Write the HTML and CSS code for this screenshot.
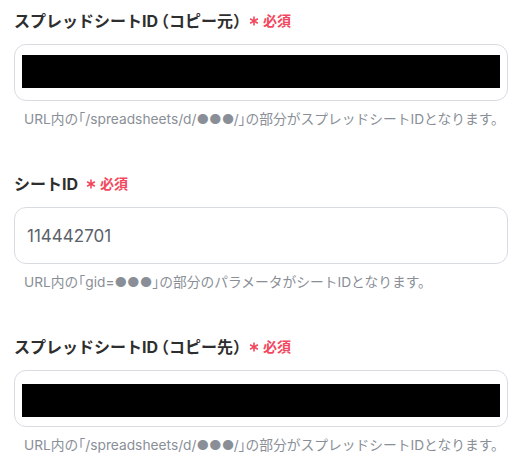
FILE: index.html
```html
<!DOCTYPE html>
<html lang="ja">
<head>
    <meta charset="UTF-8">
    <meta name="viewport" content="width=device-width, initial-scale=1.0">
    <title>スプレッドシート設定</title>
    <link rel="stylesheet" href="styles.css">
</head>
<body>

<div class="form-container">
    <div class="field">
        <label class="field-label">スプレッドシートID<span class="half paren-open">（</span>コピー元<span class="half">）</span><span class="required"><svg class="required-mark" viewBox="0 0 10 10"><path d="M5 0.5V9.5M1.1 2.75L8.9 7.25M1.1 7.25L8.9 2.75"/></svg>必須</span></label>
        <div class="field-box">
            <div class="redacted"></div>
        </div>
        <p class="field-help">URL内の<span class="half">「</span>/spreadsheets/d/●●●/<span class="half">」</span>の部分がスプレッドシートIDとなります。</p>
    </div>

    <div class="field">
        <label class="field-label">シートID<span class="required"><svg class="required-mark" viewBox="0 0 10 10"><path d="M5 0.5V9.5M1.1 2.75L8.9 7.25M1.1 7.25L8.9 2.75"/></svg>必須</span></label>
        <div class="field-box field-box-text">114442701</div>
        <p class="field-help">URL内の<span class="half">「</span>gid=●●●<span class="half">」</span>の部分のパラメータがシートIDとなります。</p>
    </div>

    <div class="field">
        <label class="field-label">スプレッドシートID<span class="half paren-open">（</span>コピー先<span class="half">）</span><span class="required"><svg class="required-mark" viewBox="0 0 10 10"><path d="M5 0.5V9.5M1.1 2.75L8.9 7.25M1.1 7.25L8.9 2.75"/></svg>必須</span></label>
        <div class="field-box field-box-low">
            <div class="redacted"></div>
        </div>
        <p class="field-help">URL内の<span class="half">「</span>/spreadsheets/d/●●●/<span class="half">」</span>の部分がスプレッドシートIDとなります。</p>
    </div>
</div>

</body>
</html>
```

FILE: styles.css
```css
body {
    font-family: 'Inter', 'Noto Sans CJK JP', sans-serif;
    margin: 0;
    padding: 0;
    background-color: #fff;
    color: #2b2b2b;
}

.form-container {
    width: 494px;
    padding: 8px 0 0 14px;
}

.field {
    margin-bottom: 42px;
}

.field:last-child {
    margin-bottom: 0;
}

.half {
    font-feature-settings: "halt";
}

.paren-open {
    margin-left: 3px;
}

.field-label {
    display: flex;
    align-items: center;
    height: 24px;
    font-size: 16px;
    font-weight: bold;
    color: #2e2e2e;
}

.required {
    display: inline-flex;
    align-items: center;
    margin-left: 8px;
    font-size: 14px;
    font-weight: bold;
    color: #f2485e;
}

.required-mark {
    width: 10px;
    height: 10px;
    margin: 2px 4px 0 0;
    fill: none;
    stroke: #f2485e;
    stroke-width: 1.6;
}

.field-box {
    box-sizing: border-box;
    height: 57px;
    margin-top: 12px;
    padding: 10px 7px 0;
    border: 1px solid #d8dce2;
    border-radius: 12px;
    background: #fff;
}

.field-box-low {
    padding-top: 13px;
}

.field-box-text {
    display: flex;
    align-items: center;
    padding: 0 12px;
    font-size: 17px;
    color: #5b616b;
}

.redacted {
    width: 478px;
    height: 33px;
    background: #000;
}

.field-help {
    margin: 8px 0 0 10px;
    height: 20px;
    line-height: 20px;
    font-size: 13.75px;
    color: #8a8f97;
    white-space: nowrap;
}
```
